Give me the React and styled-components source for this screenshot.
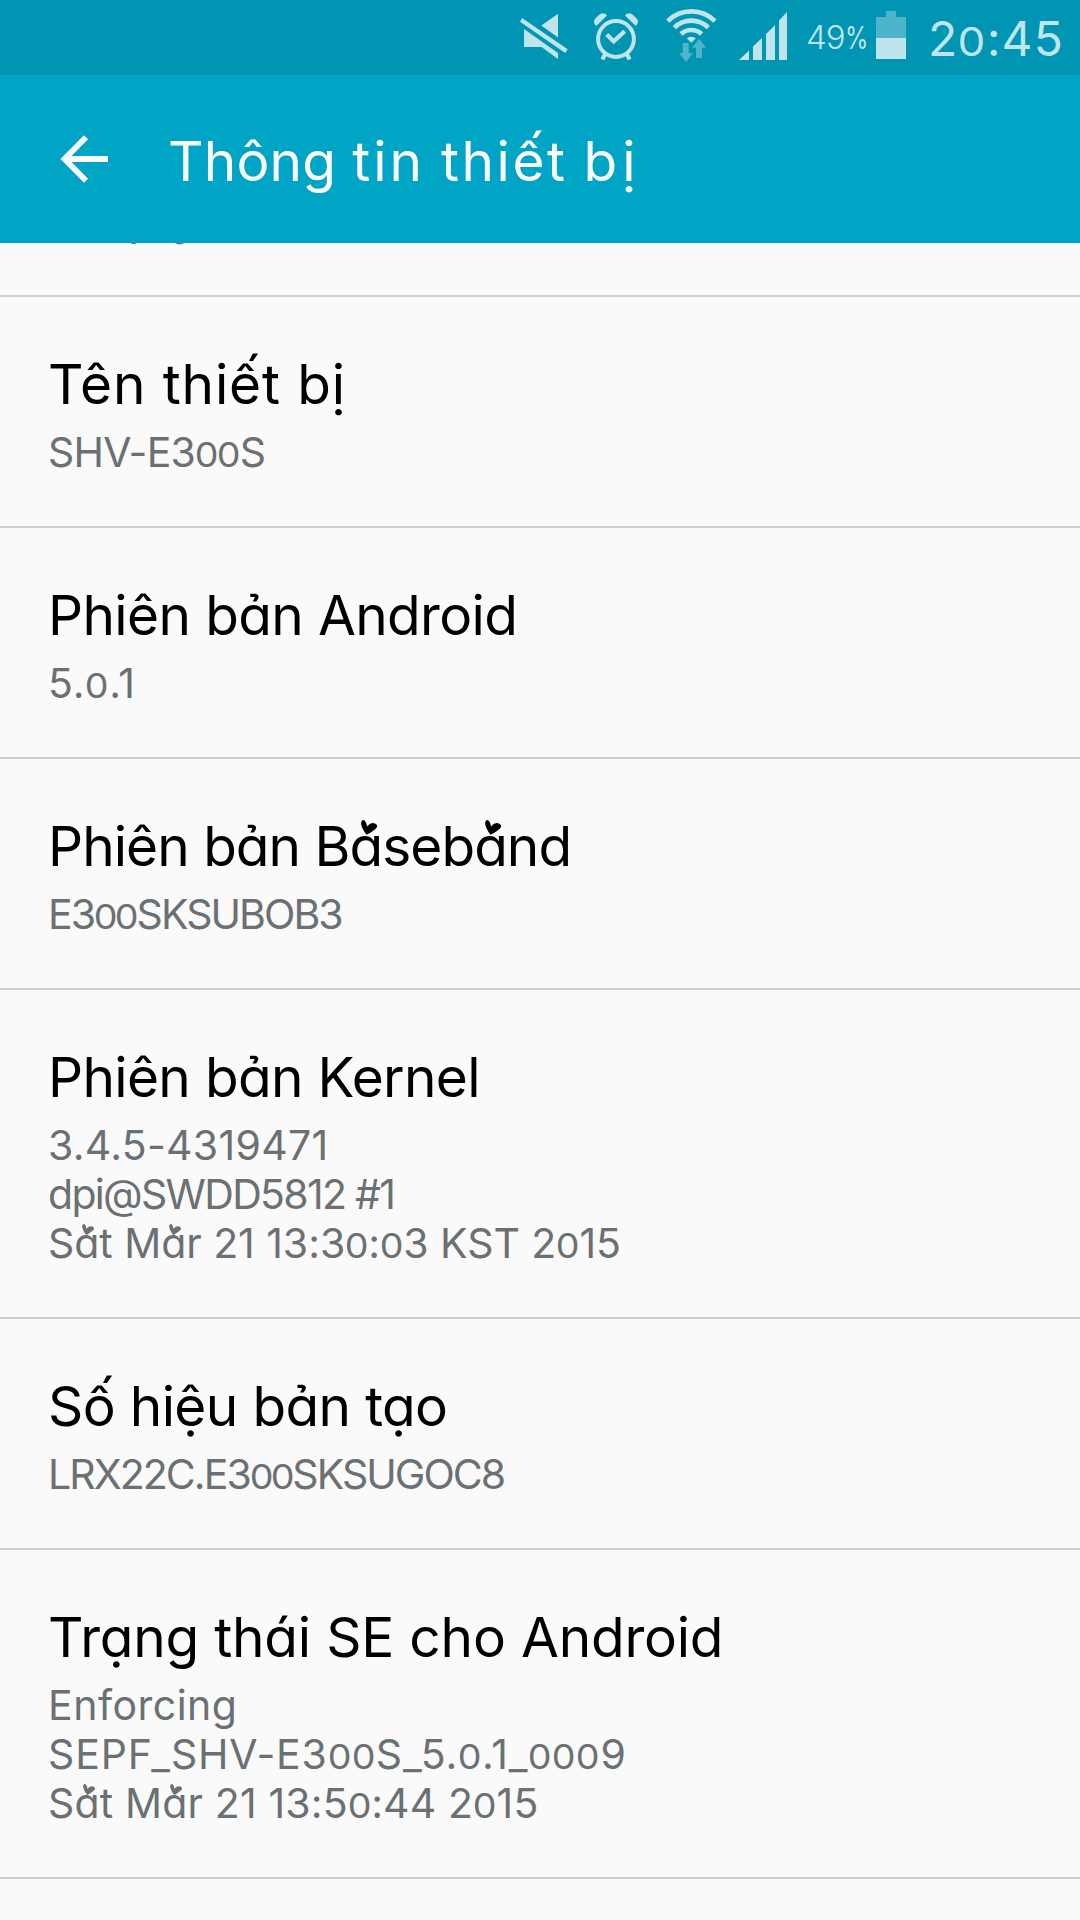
import React from 'react';
import styled, { createGlobalStyle } from 'styled-components';

const GlobalStyle = createGlobalStyle`
  body {
    margin: 0;
    background: #fafafa;
    font-family: Inter, "Liberation Sans", sans-serif;
    font-feature-settings: "cv11";
  }
`;

const Screen = styled.div`
  width: 1080px;
  height: 1920px;
  overflow: hidden;
  display: flex;
  flex-direction: column;
  background: #fafafa;
  color: #000;
  white-space: nowrap;
`;

const StatusBar = styled.div`
  flex: none;
  height: 75px;
  display: flex;
  justify-content: flex-end;
  padding-right: 16px;
  background: #0095b3;
  color: #bfe4ec;
`;

const StatusIcon = styled.svg`
  flex: none;
  width: ${p => p.$width}px;
  height: 75px;
  margin-right: ${p => p.$gap}px;
  fill: #bfe4ec;
`;

const Percent = styled.div`
  width: 63px;
  margin-right: 7px;
  font-size: 33px;
  font-weight: 300;
  line-height: 75px;
  letter-spacing: -1px;
`;

const PercentSign = styled.span`
  display: inline-block;
  font-size: 31px;
  font-weight: 400;
  transform: scaleX(0.77);
  transform-origin: left;
`;

const Clock = styled.div`
  width: 136px;
  font-size: 48px;
  font-weight: 400;
  line-height: 78px;
  letter-spacing: 1.1px;
`;

const AppBar = styled.header`
  flex: none;
  box-sizing: border-box;
  height: 168px;
  display: flex;
  align-items: flex-start;
  padding: 49px 0 0 60px;
  background: #00a5c6;
  color: #fafafa;
`;

const BackArrow = styled.svg`
  width: 50px;
  height: 50px;
  margin: 10px 58px 0 0;
  fill: none;
  stroke: #fafafa;
  stroke-width: 5.8;
`;

const Heading = styled.h1`
  display: flex;
  gap: 16px;
  margin: 0;
  font-size: 55px;
  font-weight: 400;
  line-height: 75px;
`;

const HeadingWord = styled.span`
  letter-spacing: ${p => p.$spacing}px;
`;

const PartialItem = styled.div`
  flex: none;
  display: flex;
  align-items: flex-start;
  height: 52px;
  padding-left: 131px;
  border-bottom: 2px solid #cdcecf;
`;

const Descenders = styled.svg`
  width: 54px;
  height: 2px;
  fill: #6b7073;
`;

const Item = styled.section`
  flex: none;
  padding: 50px 48px 49px;
  border-bottom: 2px solid #cdcecf;
`;

const Title = styled.h2`
  margin: 0 0 7px;
  font-size: 55px;
  font-weight: 400;
  line-height: 74px;
  letter-spacing: ${p => p.$spacing}px;
`;

const Summary = styled.div`
  font-size: 41px;
  line-height: 49px;
  letter-spacing: ${p => p.$spacing}px;
  color: #6b7073;
`;

const SmallZero = styled.span`
  display: inline-block;
  font-size: 0.82em;
  line-height: 1;
  padding: 0 0.03em;
  transform: scaleX(1.12);
`;

const HeartedLetter = styled.span`
  position: relative;
`;

const Heart = styled.svg`
  position: absolute;
  left: 0.2em;
  bottom: 0.8em;
  width: 0.31em;
  height: 0.27em;
  fill: currentColor;
`;

function DigitText({ children }) {
  return children.split('').map((c, i) => (c === '0' ? <SmallZero key={i}>0</SmallZero> : c));
}

/* An asterisk after a letter marks it as one that carries a heart. */
function Hearted({ children }) {
  return children.split(/(a\*)/).map((part, i) =>
    part === 'a*' ? (
      <HeartedLetter key={i}>
        a
        <Heart viewBox="0 0 17 15">
          <path d="M5.500 15Q1 9 0 4Q0 0 2.500 0Q5 1 6 6.500Q10 2 14 3.500Q18 5.500 15 8.500Q12 11.500 5.500 15Z" />
        </Heart>
      </HeartedLetter>
    ) : (
      <DigitText key={i}>{part}</DigitText>
    )
  );
}

const heading = [
  ['Thông', 0.2],
  ['tin', 3],
  ['thiết', 2.5],
  ['bị', 5],
];

const items = [
  { title: 'Tên thiết bị', spacing: 0.85, lines: [['SHV-E300S', -0.8]] },
  { title: 'Phiên bản Android', spacing: -0.65, lines: [['5.0.1', 0.8]] },
  { title: 'Phiên bản Ba*seba*nd', spacing: -0.98, lines: [['E300SKSUBOB3', -1.95]] },
  {
    title: 'Phiên bản Kernel',
    spacing: -0.68,
    lines: [
      ['3.4.5-4319471', 0.28],
      ['dpi@SWDD5812 #1', -1.7],
      ['Sa*t Ma*r 21 13:30:03 KST 2015', -0.05],
    ],
  },
  { title: 'Số hiệu bản tạo', spacing: -0.65, lines: [['LRX22C.E300SKSUGOC8', -1.95]] },
  {
    title: 'Trạng thái SE cho Android',
    spacing: -0.22,
    lines: [
      ['Enforcing', 0.5],
      ['SEPF_SHV-E300S_5.0.1_0009', 0.84],
      ['Sa*t Ma*r 21 13:50:44 2015', 0.15],
    ],
  },
];

export default function App() {
  return (
    <Screen>
      <GlobalStyle />
      <StatusBar>
        <StatusIcon $width={48} $gap={25} viewBox="520 0 48 75">
          <path d="M522 18L567.7 49.3L565.2 53L520 21.7ZM558 13.7V37.5L541.3 25.5ZM524 29L558 53V59L541.5 47H524Z" />
        </StatusIcon>
        <StatusIcon $width={46} $gap={26} viewBox="593 0 46 75">
          <g fill="none" stroke="#bfe4ec">
            <circle cx="616" cy="39" r="17.900" strokeWidth="4" />
            <path d="M606.7 34.500L613.7 41.300L624.7 31.200" strokeWidth="4.200" />
            <path d="M605 54L602.500 59.500M627 54L629.500 59.500" strokeWidth="4.200" />
          </g>
          <path d="M607 15.500L596.500 25.700C593.500 24.500 593.300 20.500 595.500 18.300L599.500 14.500C602 12.500 605.500 12.800 607 15.500ZM625 15.500L635.500 25.700C638.500 24.500 638.700 20.500 636.500 18.300L632.500 14.500C630 12.500 626.500 12.800 625 15.500Z" />
        </StatusIcon>
        <StatusIcon $width={52} $gap={22} viewBox="665 0 52 75">
          <g fill="none" stroke="#bfe4ec" strokeWidth="4.700">
            <path d="M667.700 21.100A33.400 33.400 0 0 1 714.900 21.100" />
            <path d="M674.300 27.700A24 24 0 0 1 708.300 27.700" />
            <path d="M681 34A15.300 15.300 0 0 1 701.600 34" />
          </g>
          <path d="M686.800 38.300A7 7 0 0 1 695.800 38.300L691.300 42.800Z" />
          <path
            fill="#4db5cb"
            d="M682.700 43H688.700V53H693L686 62L679 53H682.700ZM699 38.700L706 47.700H702V58H696V47.700H692.300Z"
          />
        </StatusIcon>
        <StatusIcon $width={48} $gap={19} viewBox="739 0 48 75">
          <path d="M739 60L749 50.500V60ZM753 60V46.500L762 38V60ZM766 60V34L775 25V60ZM779 60V20.500L787 12V60Z" />
        </StatusIcon>
        <Percent>
          49<PercentSign>%</PercentSign>
        </Percent>
        <StatusIcon $width={30} $gap={22} viewBox="876 0 30 75">
          <path fill="#4db5cb" d="M886 11H896V17H906V38H876V17H886Z" />
          <path d="M876 38H906V59H876Z" />
        </StatusIcon>
        <Clock>
          <DigitText>20:45</DigitText>
        </Clock>
      </StatusBar>
      <AppBar>
        <BackArrow viewBox="60 134 50 50">
          <path d="M86 137.300L64.500 159L86 180.700M66 159H108" />
        </BackArrow>
        <Heading>
          {heading.map(([word, spacing]) => (
            <HeadingWord key={word} $spacing={spacing}>
              {word}
            </HeadingWord>
          ))}
        </Heading>
      </AppBar>
      <PartialItem>
        <Descenders viewBox="0 0 54 2">
          <path d="M0 0H5L4 1H1ZM44 0H53L50.500 1.300H46.500Z" />
        </Descenders>
      </PartialItem>
      {items.map(item => (
        <Item key={item.title}>
          <Title $spacing={item.spacing}>
            <Hearted>{item.title}</Hearted>
          </Title>
          {item.lines.map(([text, spacing]) => (
            <Summary key={text} $spacing={spacing}>
              <Hearted>{text}</Hearted>
            </Summary>
          ))}
        </Item>
      ))}
    </Screen>
  );
}
